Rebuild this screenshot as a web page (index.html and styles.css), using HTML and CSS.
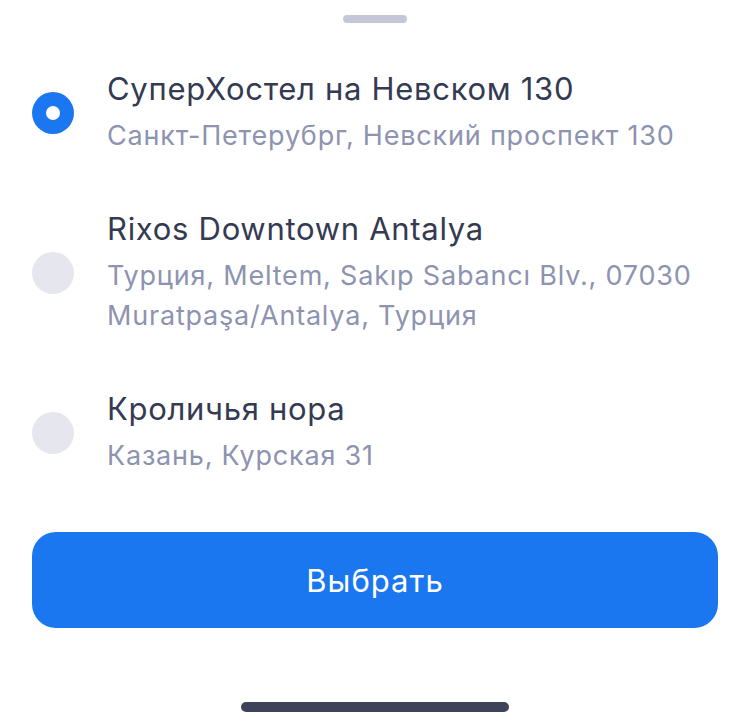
FILE: index.html
```html
<!DOCTYPE html>
<html lang="ru">
<head>
    <meta charset="UTF-8">
    <meta name="viewport" content="width=device-width, initial-scale=1.0">
    <title>Выбор отеля</title>
    <link rel="stylesheet" href="styles.css">
</head>
<body>
    <div class="sheet">
        <div class="handle"></div>

        <ul class="hotels">
            <li class="hotel">
                <span class="radio checked"></span>
                <div class="info">
                    <div class="name">СуперХостел на Невском 130</div>
                    <div class="address">Санкт-Петерубрг, Невский проспект 130</div>
                </div>
            </li>
            <li class="hotel">
                <span class="radio"></span>
                <div class="info">
                    <div class="name">Rixos Downtown Antalya</div>
                    <div class="address">Турция, Meltem, Sakıp Sabancı Blv., 07030 Muratpaşa/Antalya, Турция</div>
                </div>
            </li>
            <li class="hotel">
                <span class="radio"></span>
                <div class="info">
                    <div class="name">Кроличья нора</div>
                    <div class="address">Казань, Курская 31</div>
                </div>
            </li>
        </ul>

        <button class="select-btn" type="button">Выбрать</button>

        <div class="home-bar"></div>
    </div>
</body>
</html>
```

FILE: styles.css
```css
* {
    box-sizing: border-box;
}

body {
    margin: 0;
    background: #fff;
    font-family: Inter, "Noto Sans", sans-serif;
}

.sheet {
    width: 750px;
    height: 728px;
    padding: 15px 32px 0;
    display: flex;
    flex-direction: column;
}

.handle {
    width: 64px;
    height: 8px;
    border-radius: 4px;
    background-color: #c5c7d6;
    align-self: center;
}

.hotels {
    list-style: none;
    margin: 46px 0 0;
    padding: 0;
    display: flex;
    flex-direction: column;
    gap: 53px;
}

.hotel {
    display: flex;
    align-items: center;
    gap: 33px;
}

.radio {
    flex: none;
    width: 42px;
    height: 42px;
    border-radius: 50%;
    background-color: #e6e7ee;
}

.radio.checked {
    background-color: #1a77f0;
    position: relative;
}

.radio.checked::after {
    content: '';
    position: absolute;
    left: 14px;
    top: 14px;
    width: 14px;
    height: 14px;
    border-radius: 50%;
    background-color: #fff;
}

.info {
    padding-right: 16px;
}

.name {
    font-size: 31px;
    line-height: 40px;
    letter-spacing: 0.7px;
    color: #343a52;
}

.address {
    margin-top: 7px;
    font-size: 27px;
    line-height: 40px;
    letter-spacing: 0.8px;
    color: #8d93b0;
}

.select-btn {
    margin-top: 56px;
    height: 96px;
    width: 100%;
    border: 0;
    border-radius: 24px;
    background-color: #1a77f0;
    color: #fff;
    font-family: inherit;
    font-size: 31px;
    letter-spacing: 1px;
}

.home-bar {
    margin-top: 74px;
    width: 268px;
    height: 10px;
    border-radius: 5px;
    background-color: #3e4359;
    align-self: center;
}
```
